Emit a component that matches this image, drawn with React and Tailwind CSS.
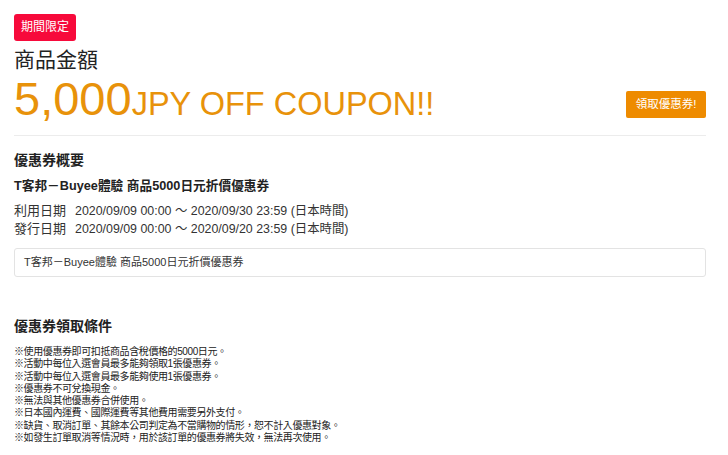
import React from 'react';

const font = { fontFamily: '"Liberation Sans", "Noto Sans CJK TC", sans-serif' };

const conditions = [
  '※使用優惠券即可扣抵商品含稅價格的5000日元。',
  '※活動中每位入選會員最多能夠領取1張優惠券。',
  '※活動中每位入選會員最多能夠使用1張優惠券。',
  '※優惠券不可兌換現金。',
  '※無法與其他優惠券合併使用。',
  '※日本國內運費、國際運費等其他費用需要另外支付。',
  '※缺貨、取消訂單、其餘本公司判定為不當購物的情形，恕不計入優惠對象。',
  '※如發生訂單取消等情況時，用於該訂單的優惠券將失效，無法再次使用。',
];

const App = () => {
  return (
    <div className="min-h-screen bg-white pl-[14px] pr-[22px] pt-[14px] text-[#333]" style={font}>
      <div className="flex">
        <span className="h-[27px] rounded-[3px] bg-[#f70a3b] px-[7px] text-[12px] leading-[27px] text-white">
          期間限定
        </span>
      </div>

      <div className="mt-[6px] h-[25px] text-[21px] leading-[25px] text-[#222]">商品金額</div>

      <div className="mt-[4px] flex h-[46px] items-start justify-between">
        <div className="h-[46px] whitespace-nowrap text-[47px] leading-[46px] text-[#e8920a]">
          5,000<span className="text-[32.5px]">JPY OFF COUPON!!</span>
        </div>
        <button className="mt-[15px] h-[27px] w-[80px] rounded-[2px] bg-[#ee8b00] text-[11.5px] leading-[27px] text-white">
          領取優惠券!
        </button>
      </div>

      <div className="mt-[13px] h-px bg-[#ececec]" />

      <h2 className="mt-[14px] h-[20px] text-[14px] font-bold leading-[20px] text-[#222]">優惠券概要</h2>
      <p className="mt-[7px] h-[18px] text-[12.7px] font-bold leading-[18px] text-[#222]">
        T客邦－Buyee體驗 商品5000日元折價優惠券
      </p>

      <div className="mt-[7px] text-[13px] leading-[18px]">
        <div className="flex h-[18px] gap-[9px]">
          <span className="w-[52px]">利用日期</span>
          <span className="text-[12.4px]">2020/09/09 00:00 ～ 2020/09/30 23:59 (日本時間)</span>
        </div>
        <div className="flex h-[18px] gap-[9px]">
          <span className="w-[52px]">發行日期</span>
          <span className="text-[12.4px]">2020/09/09 00:00 ～ 2020/09/20 23:59 (日本時間)</span>
        </div>
      </div>

      <div className="mt-[10px] h-[29px] rounded-[3px] border border-[#e3e3e3] px-[9px] text-[11px] leading-[27px]">
        T客邦－Buyee體驗 商品5000日元折價優惠券
      </div>

      <h2 className="mt-[39px] h-[20px] text-[14px] font-bold leading-[20px] text-[#222]">優惠券領取條件</h2>
      <ul className="mt-[10px] text-[10px] leading-[12.3px] tracking-[-0.4px] text-[#222]">
        {conditions.map((c) => (
          <li key={c} className="h-[12.3px]">{c}</li>
        ))}
      </ul>
    </div>
  );
};

export default App;
